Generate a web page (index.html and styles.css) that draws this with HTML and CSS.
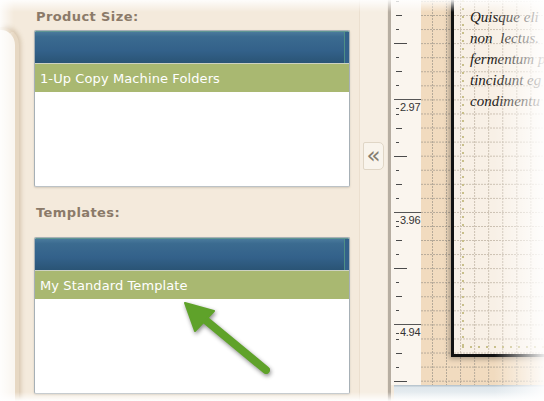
FILE: index.html
```html
<!DOCTYPE html>
<html>

<head>
    <title>Print Designer | Templates</title>
    <link rel="stylesheet" href="styles.css">
</head>

<body>
    <div class="screen">
        <div class="sidebar">
            <div class="sidebar-edge"></div>
            <div class="sidebar-body">
                <h2 class="field-label first">Product Size:</h2>
                <div class="listbox">
                    <div class="listbox-head"></div>
                    <ul class="listbox-items">
                        <li class="selected">1-Up Copy Machine Folders</li>
                    </ul>
                </div>

                <h2 class="field-label second">Templates:</h2>
                <div class="listbox">
                    <div class="listbox-head"></div>
                    <ul class="listbox-items">
                        <li class="selected">My Standard Template</li>
                    </ul>
                </div>
            </div>
        </div>

        <div class="splitter">
            <button class="collapse-btn">&laquo;</button>
        </div>

        <div class="stage">
            <div class="stage-main">
                <div class="ruler">
                    <div class="tick s"></div>
                    <div class="tick m"></div>
                    <div class="tick s"></div>
                    <div class="tick l"></div>
                    <div class="tick s"></div>
                    <div class="tick m"></div>
                    <div class="tick s"></div>
                    <div class="tick major"><span>2.97</span></div>
                    <div class="tick s"></div>
                    <div class="tick m"></div>
                    <div class="tick s"></div>
                    <div class="tick l"></div>
                    <div class="tick s"></div>
                    <div class="tick m"></div>
                    <div class="tick s"></div>
                    <div class="tick major"><span>3.96</span></div>
                    <div class="tick s"></div>
                    <div class="tick m"></div>
                    <div class="tick s"></div>
                    <div class="tick l"></div>
                    <div class="tick s"></div>
                    <div class="tick m"></div>
                    <div class="tick s"></div>
                    <div class="tick major"><span>4.94</span></div>
                    <div class="tick s"></div>
                    <div class="tick m"></div>
                    <div class="tick s"></div>
                    <div class="tick l"></div>
                </div>

                <div class="workspace">
                    <div class="page">
                        <div class="page-guide">
                            <p class="page-text">
                                <span>Quisque eli</span>
                                <span class="wide">non lectus.</span>
                                <span>fermentum p</span>
                                <span>tincidunt eg</span>
                                <span>condimentu</span>
                            </p>
                        </div>
                    </div>
                </div>
            </div>
            <div class="stage-foot"></div>
        </div>

        <!-- callout pointing at the selected template -->
        <svg class="callout" width="544" height="401" viewBox="0 0 544 401">
            <line x1="266" y1="370" x2="203" y2="318" stroke="#5fa22a" stroke-width="8" stroke-linecap="round" />
            <polygon points="185,303 214,311 195,331" fill="#5fa22a" stroke="#5fa22a" stroke-width="2" stroke-linejoin="round" />
        </svg>

        <div class="fade"></div>
    </div>
</body>

</html>
```

FILE: styles.css
```css
body {
    margin: 0;
    padding: 0;
    background: #fff;
    font-family: "DejaVu Sans", Verdana, sans-serif;
}

.screen {
    position: relative;
    display: flex;
    width: 544px;
    height: 401px;
    overflow: hidden;
    background: #f4eadc;
}

/* left panel */

.sidebar {
    display: flex;
    width: 360px;
    flex-shrink: 0;
    background: #f4eadc;
    border-right: 1px solid #ebdfcf;
    box-sizing: border-box;
}

.sidebar-edge {
    width: 15px;
    margin-top: 27px;
    background: #faf6f0;
    border-top: 3px solid #dfcdb4;
    border-right: 4px solid #e7d8c3;
    border-top-right-radius: 18px;
    box-shadow: 2px -1px 4px rgba(150, 115, 70, 0.3);
}

.sidebar-body {
    flex: 1;
    padding: 0 9px 0 15px;
}

.field-label {
    margin: 0;
    padding-left: 2px;
    font-size: 13px;
    font-weight: bold;
    letter-spacing: 0.4px;
    line-height: 16px;
    color: #8b7a69;
}

.field-label.first {
    padding-top: 9px;
    margin-bottom: 5px;
}

.field-label.second {
    margin-top: 18px;
    margin-bottom: 16px;
}

.listbox {
    height: 157px;
    box-sizing: border-box;
    background: #fff;
    border: 1px solid #a7b0b6;
    border-bottom-color: #bcc2c6;
    border-radius: 2px;
    box-shadow: 0 1px 2px rgba(120, 110, 95, 0.25);
    overflow: hidden;
}

.listbox-head {
    height: 32px;
    background: linear-gradient(to bottom, #4a7a9c 0, #3b6b90 15%, #33618a 60%, #2a5475 100%);
    border-top: 1px solid #5f9592;
    box-sizing: border-box;
    box-shadow: inset -4px 0 0 #33618a, inset -5px 0 0 #4f8f86;
}

.listbox-items {
    list-style: none;
    margin: 0;
    padding: 0;
}

.listbox-items li {
    height: 28px;
    padding-left: 5px;
    font-size: 13px;
    letter-spacing: 0.1px;
    line-height: 29px;
    color: #fff;
}

.listbox-items li.selected {
    background: #a9b871;
    border-top: 1px solid #cdd2c2;
}

/* collapse handle between panel and ruler */

.splitter {
    width: 27px;
    flex-shrink: 0;
    background: #f6eee3;
    border-right: 1px solid #efe5d8;
}

.collapse-btn {
    display: block;
    width: 21px;
    height: 28px;
    margin: 142px 0 0 3px;
    padding: 0 0 2px;
    background: #f9f4ec;
    border: 1px solid #e0d6c6;
    border-radius: 2px 5px 5px 2px;
    color: #857d6f;
    font-family: "DejaVu Sans", sans-serif;
    font-size: 23px;
    line-height: 22px;
}

/* ruler and drawing area */

.stage {
    flex: 1;
    display: flex;
    flex-direction: column;
    border-left: 3px solid #b6ada1;
}

.stage-main {
    display: flex;
    height: 385px;
}

.stage-foot {
    flex: 1;
    margin-left: 3px;
    background: linear-gradient(to bottom, #b9c6cf 0, #b9c6cf 1px, #dfe7ec 2px, #eef2f4 100%);
}

.ruler {
    width: 30px;
    flex-shrink: 0;
    padding-top: 1px;
    background: #faf5ee;
    box-sizing: border-box;
    overflow: hidden;
}

.tick {
    position: relative;
    height: 14.0625px;
}

.tick::before {
    content: "";
    display: block;
    height: 1px;
    margin-left: 5px;
    background: #4a4a4a;
}

.tick.s::before {
    width: 3px;
}

.tick.m::before {
    width: 6px;
}

.tick.l::before {
    width: 13px;
    margin-left: 3px;
}

.tick.major::before {
    width: 27px;
    margin-left: 3px;
    background: #555;
}

.tick.major::after {
    content: "";
    position: absolute;
    left: 5px;
    top: 9px;
    width: 3px;
    height: 1px;
    background: #4a4a4a;
}

.tick.major span {
    display: block;
    padding: 2px 0 0 9px;
    font-family: "Liberation Sans", Arial, sans-serif;
    font-size: 11px;
    letter-spacing: -0.3px;
    line-height: 11px;
    color: #333;
}

.workspace {
    flex: 1;
    padding-left: 30px;
    background-color: #f1dbbf;
    background-image:
        conic-gradient(from 0deg at 1px 2px, transparent 0 75%, #b3a797 75% 100%),
        conic-gradient(from 0deg at 2px 1px, transparent 0 75%, #b3a797 75% 100%);
    background-size: 14.0625px 3px, 3px 14.0625px;
    background-position: 11px 0, 0 1px;
}

.page {
    width: 220px;
    height: 357px;
    box-sizing: border-box;
    padding: 0 0 6px 8px;
    background-color: #f8f0e6;
    background-image:
        conic-gradient(from 0deg at 1px 2px, transparent 0 75%, #c9beaf 75% 100%),
        conic-gradient(from 0deg at 2px 1px, transparent 0 75%, #c9beaf 75% 100%);
    background-size: 14.0625px 3px, 3px 14.0625px;
    background-position: -22px 0, 0 1px;
    border-left: 3px solid #111;
    border-bottom: 3px solid #111;
    box-shadow: -2px 2px 5px rgba(0, 0, 0, 0.3);
}

.page-guide {
    height: 100%;
    box-sizing: border-box;
    padding: 7px 0 0 8px;
    background-image:
        linear-gradient(to bottom, #c9c08a 2px, transparent 2px),
        linear-gradient(to right, #c9c08a 2px, transparent 2px);
    background-size: 2px 8px, 8px 2px;
    background-position: 0 0, 0 100%;
    background-repeat: repeat-y, repeat-x;
}

.page-text {
    margin: 0;
    font-family: "Liberation Serif", "Times New Roman", serif;
    font-style: italic;
    font-size: 15px;
    line-height: 21px;
    color: #1c1a18;
}

.page-text span {
    display: block;
    white-space: nowrap;
}

.page-text span.wide {
    word-spacing: 4px;
}

/* overlays */

.callout {
    position: absolute;
    left: 0;
    top: 0;
    pointer-events: none;
    filter: drop-shadow(1px 2px 2px rgba(0, 0, 0, 0.45));
}

.fade {
    position: absolute;
    inset: 0;
    pointer-events: none;
    background:
        linear-gradient(to left, rgba(255, 255, 255, 0.9) 0, rgba(255, 255, 255, 0) 50px),
        linear-gradient(to bottom, rgba(255, 255, 255, 0.9) 0, rgba(255, 255, 255, 0) 12px),
        linear-gradient(to right, rgba(255, 255, 255, 0.85) 0, rgba(255, 255, 255, 0) 14px),
        linear-gradient(to top, rgba(255, 255, 255, 0.95) 0, rgba(255, 255, 255, 0) 9px);
}
```
